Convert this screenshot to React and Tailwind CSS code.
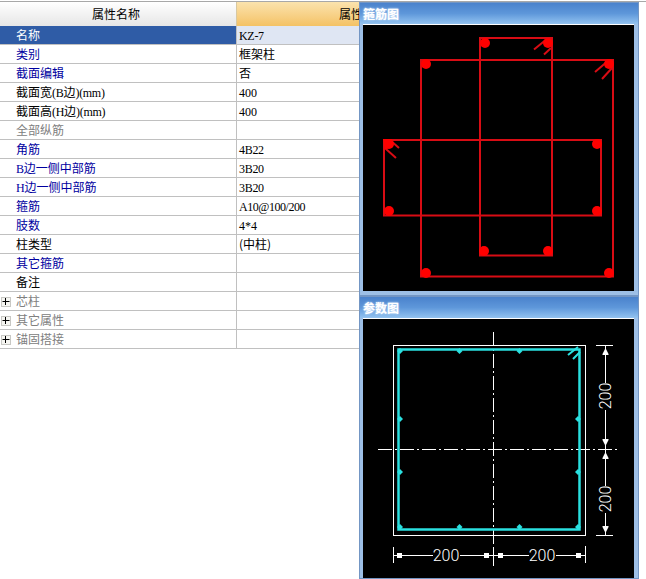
const L = ({ children }) => (
  <span className="font-['Liberation_Serif',serif] tracking-[-0.3px]">{children}</span>
);
const N = ({ children }) => (
  <span className="font-['Liberation_Serif',serif]">{children}</span>
);

const BLUE = "text-[#0000a0]";
const GRAY = "text-[#808080]";

const rows = [
  { name: "名称", value: <L>KZ-7</L>, selected: true },
  { name: "类别", color: BLUE, value: "框架柱" },
  { name: "截面编辑", color: BLUE, value: "否" },
  { name: <>截面宽<L>(B</L>边<L>)(mm)</L></>, value: <N>400</N> },
  { name: <>截面高<L>(H</L>边<L>)(mm)</L></>, value: <N>400</N> },
  { name: "全部纵筋", color: GRAY, value: "" },
  { name: "角筋", color: BLUE, value: <L>4B22</L> },
  { name: <><L>B</L>边一侧中部筋</>, color: BLUE, value: <L>3B20</L> },
  { name: <><L>H</L>边一侧中部筋</>, color: BLUE, value: <L>3B20</L> },
  { name: "箍筋", color: BLUE, value: <span className="font-['Liberation_Serif',serif] tracking-[-0.45px]">A10@100/200</span> },
  { name: "肢数", color: BLUE, value: <N>4*4</N> },
  { name: "柱类型", value: <>(中柱)</> },
  { name: "其它箍筋", color: BLUE, value: "" },
  { name: "备注", value: "" },
  { name: "芯柱", color: GRAY, value: "", expand: true },
  { name: "其它属性", color: GRAY, value: "", expand: true },
  { name: "锚固搭接", color: GRAY, value: "", expand: true },
];

function Row({ name, value, color, selected, expand }) {
  return (
    <div className="flex h-[19px] border-b border-[#c0c0c0] leading-[18px]">
      <div
        className={`relative w-[236px] shrink-0 pl-4 whitespace-nowrap ${
          selected ? "bg-[#2f5ca6] text-white" : color || "text-black"
        }`}
      >
        {expand && (
          <svg className="absolute left-px top-[5px]" width="10" height="10" viewBox="0 0 10 10">
            <rect x="0.5" y="0.5" width="9" height="9" fill="#f6f6f2" stroke="#c8c8c4" />
            <path d="M1.5 4.5H8.5M4.5 1V8" stroke="#000" strokeWidth="1" />
          </svg>
        )}
        {name}
      </div>
      <div
        className={`flex-1 border-l border-[#c0c0c0] pl-[2px] whitespace-nowrap text-black ${
          selected ? "bg-[#dfe6f3]" : ""
        }`}
      >
        {value}
      </div>
    </div>
  );
}

function Panel({ title, h, children, bodyH }) {
  return (
    <div className={`flex flex-col border border-[#7396c4] bg-[#9dbfe6] ${h} overflow-hidden`}>
      <div className="flex h-[21px] shrink-0 items-center bg-gradient-to-b from-[#4a82cc] via-[#5e97da] to-[#93c3f0] pl-[3px] text-[12px] font-bold text-white [text-shadow:0_0_2px_#e8f2ff]">
        {title}
      </div>
      <div className={`ml-[3px] mr-[4px] shrink-0 border-t border-white bg-black ${bodyH}`}>{children}</div>
    </div>
  );
}

const RED = "#d80c14";

function RebarDrawing() {
  const dots = [
    [426, 64], [609, 64], [426, 273], [609, 273],
    [485, 43], [548, 43], [484, 251], [548, 251],
    [389, 144], [597, 144], [389, 211], [597, 211],
  ];
  return (
    <svg className="block" width="271" height="266" viewBox="363 25 271 266">
      <g fill="none" stroke={RED} strokeWidth="2">
        <rect x="421" y="60" width="192" height="216.5" />
        <rect x="480" y="38" width="72" height="217.5" />
        <rect x="384" y="140" width="217" height="75.5" />
        <path d="M547.5 38.5L534 49.5M551 48L544 54.5M609 60L595 72M612 68L602 79M390 140L399 148M386 149L396 158" />
      </g>
      <g fill="#ff0000">
        {dots.map(([x, y]) => (
          <circle key={`${x}-${y}`} cx={x} cy={y} r="5" />
        ))}
        <path d="M383 139H392L391 147L385 150Z" />
      </g>
    </svg>
  );
}

function ParamDrawing() {
  const cyanDots = [
    [459.5, 350], [519.5, 350], [459.5, 526], [519.5, 526],
    [400, 418], [578, 418], [400, 471], [578, 471],
    [400, 350], [578, 526], [400, 526],
  ];
  const labelStyle = { fontFamily: "Roboto, 'Liberation Sans', sans-serif", fontSize: 16, fontWeight: 300 };
  return (
    <svg className="block" width="271" height="261" viewBox="363 318 271 261">
      <g fill="none" stroke="#fff" strokeWidth="1">
        <rect x="393.5" y="344.5" width="192" height="190" />
        <path d="M493.5 331V568" strokeDasharray="14 3 2 3" />
        <path d="M378 448.5H620" strokeDasharray="14 3 2 3" />
        <path d="M605.5 344V534M596 344.5H613M596 534.5H613" />
        <path d="M393.5 546V562M493.5 546V562M585.5 545V562M393 554.5H586" />
      </g>
      <rect x="398.5" y="348.5" width="181" height="180" fill="none" stroke="#2ae0e0" strokeWidth="2.5" />
      <path d="M568 354L578 346M573 358L580 351" stroke="#2ae0e0" strokeWidth="2" fill="none" />
      <g fill="#2ae0e0">
        {cyanDots.map(([x, y]) => (
          <path key={`${x}-${y}`} d={`M${x} ${y - 3}L${x + 3} ${y}L${x} ${y + 3}L${x - 3} ${y}Z`} />
        ))}
      </g>
      <g fill="#fff">
        <path d="M605.5 347L608.5 353V354H602.5V353Z" />
        <path d="M605.5 445L608.5 439V438H602.5V439Z" />
        <path d="M605.5 451L608.5 457V458H602.5V457Z" />
        <path d="M605.5 532L608.5 526V525H602.5V526Z" />
        <rect x="397" y="552" width="5" height="5" />
        <rect x="484" y="552" width="5" height="5" />
        <rect x="498" y="552" width="5" height="5" />
        <rect x="576" y="552" width="5" height="5" />
      </g>
      <rect x="433" y="544" width="27" height="20" fill="#000" />
      <rect x="529" y="544" width="27" height="20" fill="#000" />
      <text x="446" y="560" textAnchor="middle" fill="#fff" style={labelStyle}>200</text>
      <text x="542" y="560" textAnchor="middle" fill="#fff" style={labelStyle}>200</text>
      <rect x="597" y="382" width="17" height="27" fill="#000" />
      <rect x="597" y="485" width="17" height="27" fill="#000" />
      <text x="611" y="395" textAnchor="middle" fill="#fff" style={labelStyle} transform="rotate(-90 611 395)">200</text>
      <text x="611" y="498" textAnchor="middle" fill="#fff" style={labelStyle} transform="rotate(-90 611 498)">200</text>
    </svg>
  );
}

export default function App() {
  return (
    <div className="relative h-[579px] w-[646px] overflow-hidden bg-white font-['Noto_Sans_CJK_SC',sans-serif] text-[12px] text-black">
      <div className="h-[2px] border-b border-[#a8a8a8]" />
      <div className="flex">
        <div className="w-[359px] shrink-0">
          <div className="flex h-[24px] leading-[23px]">
            <div className="w-[236px] shrink-0 bg-gradient-to-b from-white to-[#e6e6e6] pr-1 text-center">
              属性名称
            </div>
            <div className="flex-1 overflow-hidden whitespace-nowrap border-l border-[#d8c8a0] bg-gradient-to-b from-[#fbe3ad] to-[#f4c264] pl-[102px]">
              属性
            </div>
          </div>
          {rows.map((r, i) => (
            <Row key={i} {...r} />
          ))}
        </div>
        <div className="flex w-[280px] shrink-0 flex-col">
          <Panel title="箍筋图" h="h-[294px]" bodyH="h-[267px]">
            <RebarDrawing />
          </Panel>
          <Panel title="参数图" h="h-[283px]" bodyH="h-[262px]">
            <ParamDrawing />
          </Panel>
        </div>
      </div>
    </div>
  );
}
